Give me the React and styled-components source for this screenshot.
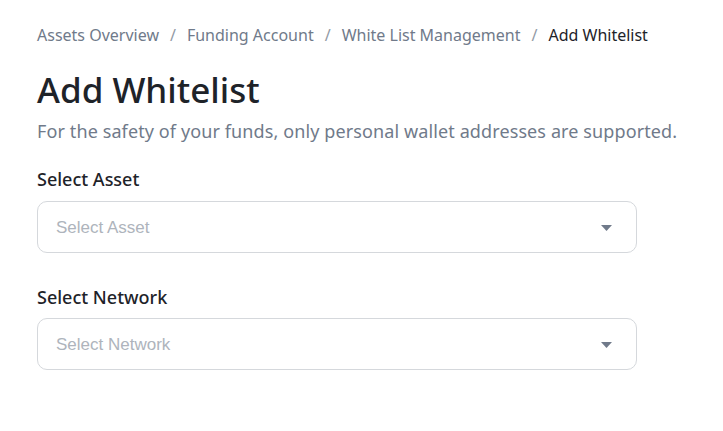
import React from "react";
import styled, { createGlobalStyle } from "styled-components";

const GlobalStyle = createGlobalStyle`
  body {
    margin: 0;
    background: #fff;
    font-family: "Noto Sans", "Liberation Sans", sans-serif;
    color: #1e2329;
  }
`;

const Page = styled.main`
  padding: 23px 37px;
  display: flex;
  flex-direction: column;
`;

const Crumbs = styled.nav`
  display: flex;
  align-items: center;
  font-size: 16px;
  line-height: 24px;
  color: #707a8a;
`;

const Crumb = styled.span`
  color: ${(p) => (p.$current ? "#1e2329" : "#707a8a")};
`;

const Sep = styled.span`
  color: #929aa5;
  margin: 0 11px;
`;

const Title = styled.h1`
  margin: 21px 0 0;
  font-size: 35px;
  line-height: 44px;
  font-weight: 500;
  color: #1e2329;
`;

const Subtitle = styled.p`
  margin: 7px 0 0;
  font-size: 18px;
  line-height: 24px;
  letter-spacing: 0.11px;
  color: #707a8a;
`;

const Field = styled.div`
  margin-top: ${(p) => p.$gap}px;
  width: 600px;
  display: flex;
  flex-direction: column;
  gap: ${(p) => p.$inner}px;
`;

const Label = styled.label`
  font-size: 18px;
  line-height: 24px;
  font-weight: 500;
  color: #1e2329;
`;

const SelectBox = styled.div`
  height: 52px;
  box-sizing: border-box;
  border: 1px solid #d5d8dc;
  border-radius: 10px;
  display: flex;
  align-items: center;
  justify-content: space-between;
  padding: 1px 24px 0 18px;
`;

const Placeholder = styled.span`
  font-family: "Liberation Sans", Arial, sans-serif;
  font-size: 17px;
  color: #aeb4bc;
`;

const Caret = () => (
  <svg width="11" height="6" viewBox="0 0 11 6">
    <path d="M0 0h11L5.5 6z" fill="#707a8a" />
  </svg>
);

const crumbs = ["Assets Overview", "Funding Account", "White List Management"];

export default function App() {
  return (
    <>
      <GlobalStyle />
      <Page>
        <Crumbs>
          {crumbs.map((c) => (
            <React.Fragment key={c}>
              <Crumb>{c}</Crumb>
              <Sep>/</Sep>
            </React.Fragment>
          ))}
          <Crumb $current>Add Whitelist</Crumb>
        </Crumbs>
        <Title>Add Whitelist</Title>
        <Subtitle>
          For the safety of your funds, only personal wallet addresses are supported.
        </Subtitle>
        <Field $gap={24} $inner={10}>
          <Label>Select Asset</Label>
          <SelectBox>
            <Placeholder>Select Asset</Placeholder>
            <Caret />
          </SelectBox>
        </Field>
        <Field $gap={32} $inner={9}>
          <Label>Select Network</Label>
          <SelectBox>
            <Placeholder>Select Network</Placeholder>
            <Caret />
          </SelectBox>
        </Field>
      </Page>
    </>
  );
}
